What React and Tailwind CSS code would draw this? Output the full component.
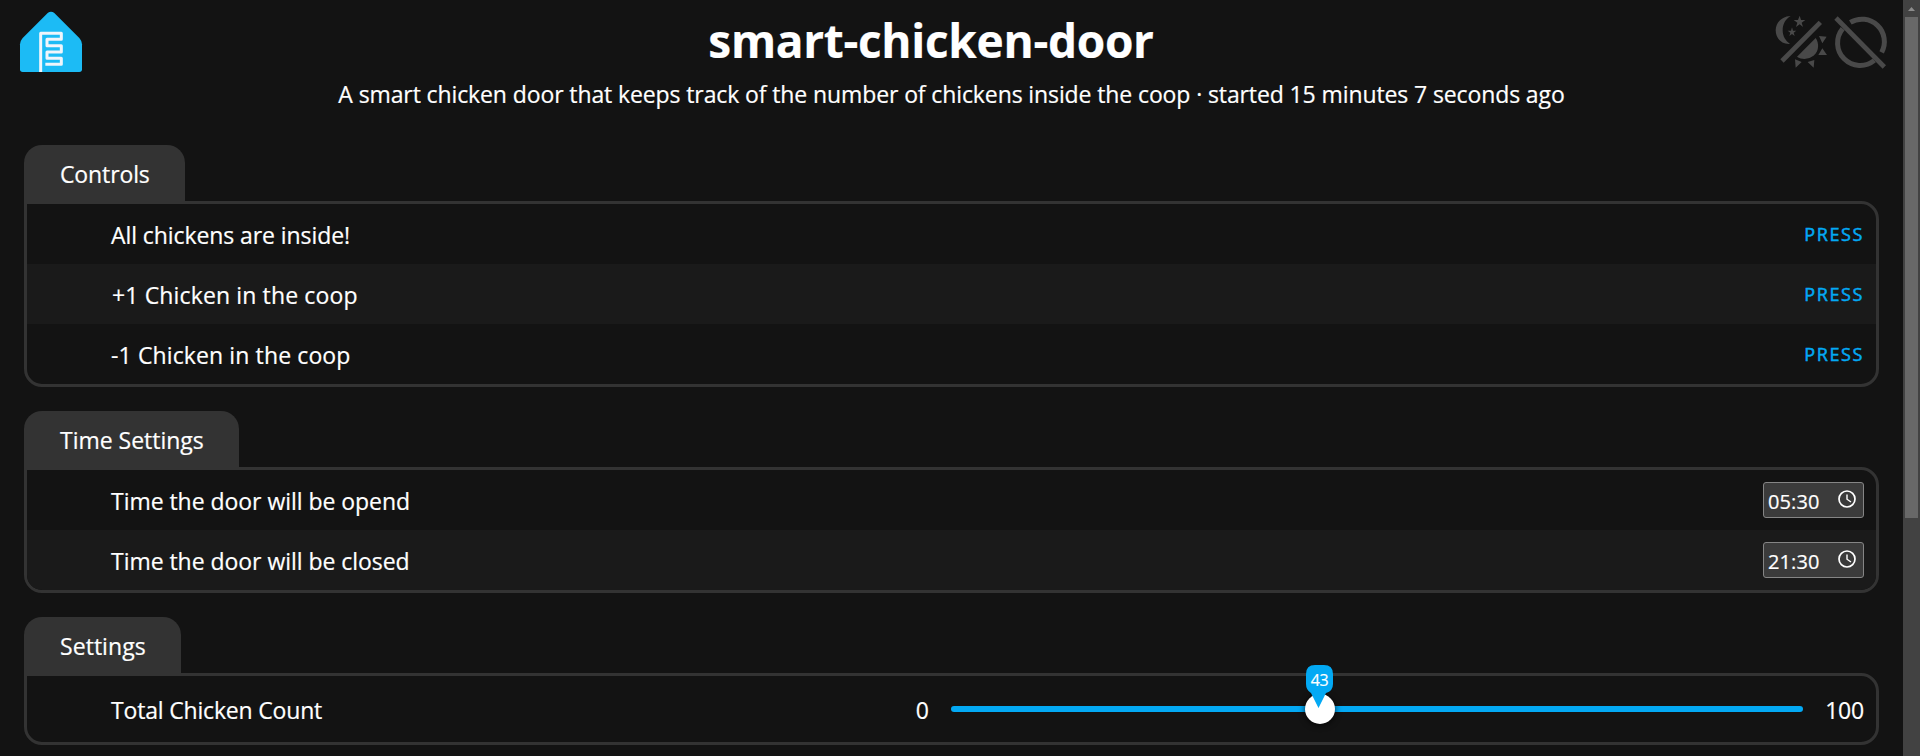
import React from "react";

function Logo() {
  return (
    <svg className="mt-[5px] ml-[10px] h-[75px] w-[80px] shrink-0" viewBox="0 0 240 225" fill="none">
      <path
        d="M113 24Q123 16 133 24L208 99Q216 108 216 118V193Q216 201 208 201H38Q30 201 30 193V118Q30 108 38 99Z"
        fill="#1cbbf5"
      />
      <path
        d="M92 201V85H154V103H111V122H154V141H111V160H154V178H106"
        stroke="#f0f5fb"
        strokeWidth="9"
        strokeLinejoin="round"
      />
    </svg>
  );
}

function SchemeIcons() {
  return (
    <svg className="mt-2 mr-[3px] h-[70px] w-[130px] shrink-0" viewBox="0 0 390 210" fill="#494949">
      <path d="M62 24C36 25 17 44 17 67C17 91 35 110 60 108C46 98 38 84 38 67C38 48 46 34 62 24Z" />
      <path d="M89 23L93 36H106L95 44L99 57L89 49L78 57L82 44L71 36H84Z" />
      <path d="M66 58L69 68H79L71 74L74 84L66 78L58 84L61 74L53 68H63Z" />
      <path d="M36 159L151 43" stroke="#494949" strokeWidth="14" />
      <path d="M137 90C148 106 147 129 132 142C117 155 96 156 81 146Z" />
      <path d="M147 84L170 86L157 106ZM157 121L171 141L145 141ZM75 154L95 162L77 179ZM133 156L131 179L113 162Z" />
      <g fill="none" stroke="#494949">
        <path d="M241 43A67.500 67.500 0 0 1 335 133" strokeWidth="15" />
        <path d="M218 62A67.500 67.500 0 0 0 313 157" strokeWidth="15" />
        <path d="M198 30L343 177" strokeWidth="14" />
      </g>
    </svg>
  );
}

function Panel({ title, tabClass, children }) {
  return (
    <section className="mb-6">
      <h2
        className={`${tabClass} h-14 rounded-t-[18px] bg-[#333] pt-[13px] pl-9 text-[23px] leading-8 font-normal`}
      >
        {title}
      </h2>
      <div className="rounded-[18px] rounded-tl-none border-[3px] border-[#333]">{children}</div>
    </section>
  );
}

function Row({ label, labelClass = "tracking-[-0.04px]", alt, tall, children }) {
  return (
    <div
      className={`flex items-center justify-between pr-3 pl-[84px] last:rounded-b-[15px] ${
        tall ? "h-[66px]" : "h-[60px]"
      } ${alt ? "bg-[#1a1a1a]" : ""}`}
    >
      <span className={`pt-0.5 text-[23px] leading-8 ${labelClass}`}>{label}</span>
      {children}
    </div>
  );
}

function Press() {
  return (
    <button className="pb-px text-[18px] leading-6 font-medium tracking-[1.6px] text-[#03a9f4] [-webkit-text-stroke:0.5px_#03a9f4]">
      PRESS
    </button>
  );
}

function TimeField({ value }) {
  return (
    <div className="flex h-9 w-[101px] items-center justify-between rounded-[3px] border border-[#858585] bg-[#3b3b3b] pr-[7.5px] pl-1">
      <span className="pt-[3px] text-[20px] leading-7 tracking-[0.1px]">{value}</span>
      <svg className="mb-[2px] h-[18px] w-[18px]" viewBox="0 0 18 18" fill="none" stroke="#fff" strokeWidth="1.700">
        <circle cx="9" cy="9" r="8" />
        <path d="M9 4.500V9.200L13 12" strokeWidth="1.400" />
      </svg>
    </div>
  );
}

function CountSlider() {
  return (
    <div className="flex items-center">
      <span className="pt-0.5 text-[23px] leading-8">0</span>
      <div className="relative mr-[22px] ml-[22px] h-1.5 w-[852px] rounded-full bg-[#03a9f4]">
        <div className="absolute -top-3 left-[354px] size-[30px] rounded-full bg-white shadow-[0_1px_6px_rgba(0,0,0,0.8)]" />
        <svg className="absolute -top-[41px] left-[355px] h-[44px] w-[27px]" viewBox="0 0 27 44" fill="#03a9f4">
          <path d="M9 0H18Q27 0 27 9V19Q27 26 20 28L18.500 31L12.500 43L6.500 31L5 28Q0 25 0 19V9Q0 0 9 0Z" />
        </svg>
        <span className="absolute -top-[36px] left-[355px] w-[27px] text-center text-[16px] leading-5 tracking-[-0.5px]">
          43
        </span>
      </div>
      <span className="w-[39px] pt-0.5 text-right text-[23px] leading-8 tracking-[-0.2px]">100</span>
    </div>
  );
}

function Scrollbar() {
  return (
    <div className="flex w-[17px] shrink-0 flex-col items-center bg-[#424242]">
      <div className="flex h-[17px] items-center">
        <svg className="h-1 w-[7px]" viewBox="0 0 7 4" fill="#8c8c8c">
          <path d="M3.500 0L7 4H0Z" />
        </svg>
      </div>
      <div className="h-[501px] w-[13px] bg-[#686868]" />
    </div>
  );
}

export default function App() {
  return (
    <div className="flex h-[756px] overflow-hidden bg-[#131313] font-['Open_Sans','Noto_Sans',sans-serif] text-white [-webkit-text-stroke:0.2px_#fff]">
      <div className="min-w-0 flex-1">
        <header className="h-[145px]">
          <div className="flex h-[78px] items-start">
            <Logo />
            <h1 className="flex-1 pt-[9px] pl-0.5 text-center text-[46px] leading-[62px] font-bold tracking-[-0.3px]">
              smart-chicken-door
            </h1>
            <SchemeIcons />
          </div>
          <p className="text-center text-[23px] leading-8 tracking-[-0.11px]">
            A smart chicken door that keeps track of the number of chickens inside the coop · started 15 minutes 7
            seconds ago
          </p>
        </header>
        <main className="px-6">
          <Panel title="Controls" tabClass="w-[161px] tracking-[-0.12px]">
            <Row label="All chickens are inside!" labelClass="tracking-[-0.08px]">
              <Press />
            </Row>
            <Row label="+1 Chicken in the coop" labelClass="pl-px tracking-[0.14px]" alt>
              <Press />
            </Row>
            <Row label="-1 Chicken in the coop" labelClass="tracking-[0.12px]">
              <Press />
            </Row>
          </Panel>
          <Panel title="Time Settings" tabClass="w-[215px] tracking-[-0.02px]">
            <Row label="Time the door will be opend">
              <TimeField value="05:30" />
            </Row>
            <Row label="Time the door will be closed" alt>
              <TimeField value="21:30" />
            </Row>
          </Panel>
          <Panel title="Settings" tabClass="w-[157px] tracking-[0.05px]">
            <Row label="Total Chicken Count" labelClass="tracking-[-0.18px]" tall>
              <CountSlider />
            </Row>
          </Panel>
        </main>
      </div>
      <Scrollbar />
    </div>
  );
}
